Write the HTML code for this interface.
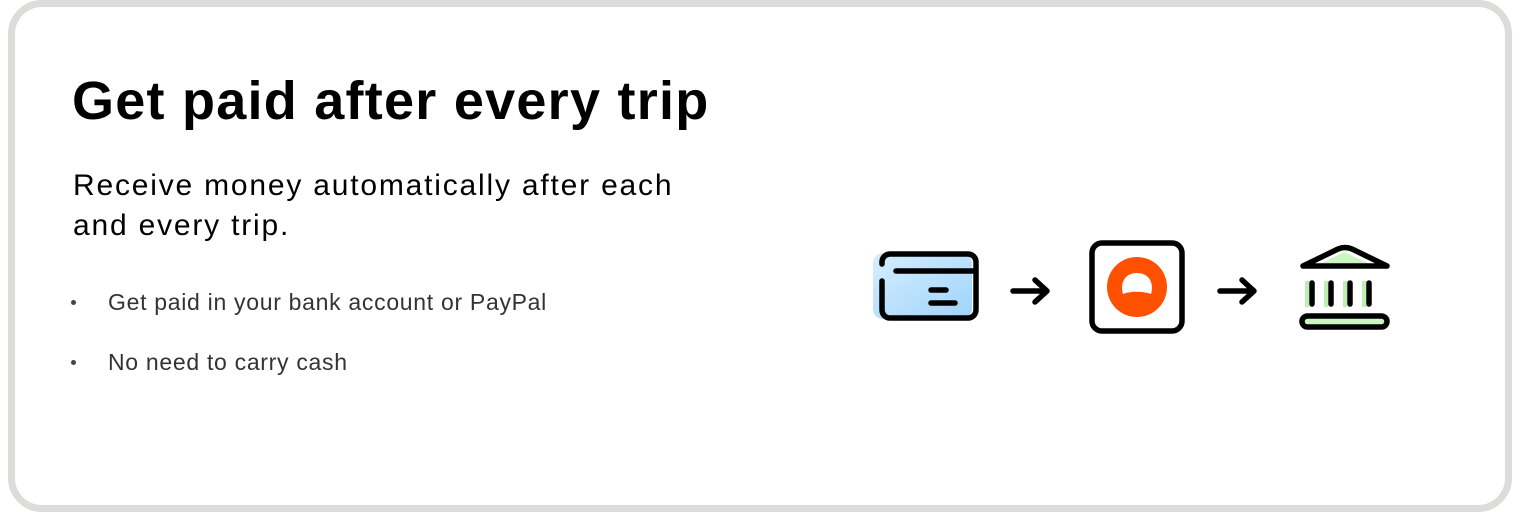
<!DOCTYPE html>
<html><head><style>
body{margin:0;width:1521px;height:512px;background:#fff;font-family:"Liberation Sans",sans-serif;overflow:hidden;position:relative}
.box{position:absolute;left:8px;top:0;width:1490px;height:498px;border:7px solid #dedbdb;border-radius:34px}
h1{position:absolute;left:72px;top:70px;margin:0;font-size:54px;font-weight:bold;color:#000;letter-spacing:1.25px}
.sub{position:absolute;left:73px;top:166px;margin:0;font-size:30px;line-height:40px;color:#000;letter-spacing:1.8px;white-space:nowrap}
.li{position:absolute;left:108px;font-size:23px;color:#333;letter-spacing:0.7px}
.dot{position:absolute;left:71px;width:5px;height:5px;border-radius:50%;background:#444}
</style></head><body>
<div class="box"></div>
<h1>Get paid after every trip</h1>
<p class="sub">Receive money automatically after each<br>and every trip.</p>
<div class="dot" style="top:300px"></div><div class="li" style="top:289px">Get paid in your bank account or PayPal</div>
<div class="dot" style="top:360px"></div><div class="li" style="top:349px">No need to carry cash</div>
<svg style="position:absolute;left:0;top:0" width="1521" height="512">
<defs><linearGradient id="g" x1="0" y1="0" x2="1" y2="1"><stop offset="0" stop-color="#d6eeff"/><stop offset="1" stop-color="#9fd3fb"/></linearGradient></defs>
<rect x="873" y="253" width="99" height="66" rx="10" fill="url(#g)"/>
<g fill="none" stroke="#000" stroke-width="5.5" stroke-linecap="round" stroke-linejoin="round">
<path d="M882 264 V262 a8 8 0 0 1 8 -8 H968 a8 8 0 0 1 8 8 V310 a8 8 0 0 1 -8 8 H890 a8 8 0 0 1 -8 -8 V281"/>
<path d="M896 271 H975 M931 290 H946 M931 303 H955"/>
<path d="M1013 291 H1046 M1035 280 L1047 291 L1035 302"/>
<rect x="1092" y="243" width="90" height="88" rx="10"/>
<path d="M1220 291 H1253 M1242 280 L1254 291 L1242 302"/>
</g>
<circle cx="1137" cy="287" r="30" fill="#ff5000"/>
<path d="M1123 294 C1120 284 1124 273 1137 273 C1150 273 1154 284 1151 294 C1144 291 1130 291 1123 294Z" fill="#fff"/>
<path d="M1324 262 L1344 252 L1374 266 L1306 266Z" fill="#ccf5c4"/>
<rect x="1305" y="281" width="4" height="26" fill="#bdf0b0"/><rect x="1324" y="281" width="4" height="26" fill="#bdf0b0"/><rect x="1343" y="281" width="4" height="26" fill="#bdf0b0"/><rect x="1362" y="281" width="4" height="26" fill="#bdf0b0"/>
<rect x="1299" y="316" width="88" height="11" rx="5" fill="#ccf5c4"/>
<g fill="none" stroke="#000" stroke-width="5.5" stroke-linecap="round" stroke-linejoin="round">
<path d="M1303 266 L1338 249 Q1345 246 1352 249 L1387 266 Z"/>
<path d="M1312 283 V304 M1331 283 V304 M1350 283 V304 M1369 283 V304"/>
<rect x="1302" y="316" width="85" height="11" rx="5.5"/>
</g>
</svg>
</body></html>
